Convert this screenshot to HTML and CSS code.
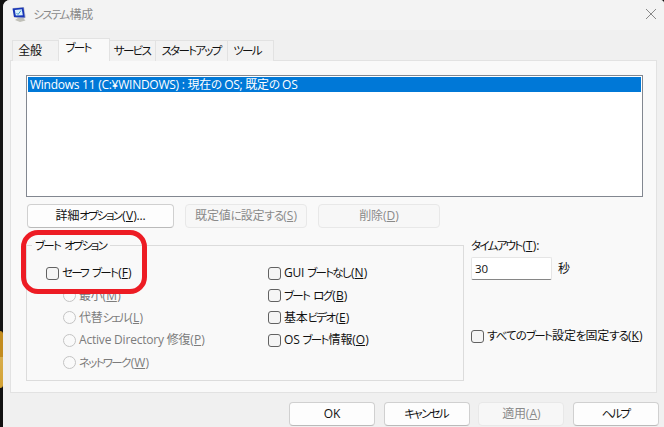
FILE: index.html
```html
<!DOCTYPE html>
<html lang="ja">
  <head>
    <meta charset="UTF-8" />
    <title>システム構成</title>
    <link rel="stylesheet" href="styles.css">
  </head>
  <body>
    <div class="desktop-edge"><div class="gold"></div></div>
    <div class="window">
      <header class="titlebar">
        <svg class="app-icon" width="16" height="16" viewBox="0 0 16 16">
          <path d="M6 11l5 0 2.500 2.500-5.500 1.500-5-2z" fill="#c0c0b8" />
          <path d="M1 1l11-1 1.800 10.500-2.800 1.500-9-1.500z" fill="#b8bbc6" />
          <path d="M.5 1.500l11-1L12.800 10.500 2 10z" fill="#1936b8" />
          <path d="M2.800 3l7-.7 1 6-7 .2z" fill="#d9f1fb" />
          <path d="M4.500 6l1.500 1.500L9 3.500" fill="none" stroke="#3b91cc" />
        </svg>
        <h1 class="title"><span class="kana">システム</span>構成</h1>
        <svg class="close" width="12" height="12" viewBox="0 0 12 12">
          <path d="M1 1l10 10M11 1L1 11" fill="none" stroke="#888" />
        </svg>
      </header>

      <nav class="tabs">
        <div class="tab general">全般</div>
        <div class="tab active"><span class="kana">ブート</span></div>
        <div class="tab service"><span class="kana">サービス</span></div>
        <div class="tab startup"><span class="kana">スタートアップ</span></div>
        <div class="tab tools"><span class="kana">ツール</span></div>
      </nav>

      <main class="panel">
        <div class="boot-list">
          <div class="boot-entry">Windows 11 (C:¥WINDOWS) : 現在<span class="kana">の</span> OS; 既定<span class="kana">の</span> OS</div>
        </div>

        <div class="actions">
          <button class="btn wide">詳細<span class="kana">オプション</span>(<u>V</u>)...</button>
          <button class="btn" disabled>既定値<span class="kana hira">に</span>設定<span class="kana hira">する</span>(<u>S</u>)</button>
          <button class="btn" disabled>削除(<u>D</u>)</button>
        </div>

        <div class="settings">
          <section class="group">
            <h2 class="legend"><span class="kana">ブート</span> <span class="kana">オプション</span></h2>
            <div class="column">
              <label class="option"><i class="box"></i><span><span class="kana">セーフ</span> <span class="kana">ブート</span>(<u>F</u>)</span></label>
              <label class="option sub"><i class="radio"></i><span>最小(<u>M</u>)</span></label>
              <label class="option sub"><i class="radio"></i><span>代替<span class="kana">シェル</span>(<u>L</u>)</span></label>
              <label class="option sub"><i class="radio"></i><span>Active Directory 修復(<u>P</u>)</span></label>
              <label class="option sub"><i class="radio"></i><span><span class="kana">ネットワーク</span>(<u>W</u>)</span></label>
            </div>
            <div class="column">
              <label class="option"><i class="box"></i><span>GUI <span class="kana">ブートなし</span>(<u>N</u>)</span></label>
              <label class="option"><i class="box"></i><span><span class="kana">ブート</span> <span class="kana">ログ</span>(<u>B</u>)</span></label>
              <label class="option"><i class="box"></i><span>基本<span class="kana">ビデオ</span>(<u>E</u>)</span></label>
              <label class="option"><i class="box"></i><span>OS <span class="kana">ブート</span>情報(<u>O</u>)</span></label>
            </div>
            <div class="highlight"></div>
          </section>

          <section class="timeout">
            <div class="timeout-label"><span class="kana">タイムアウト</span>(<u>T</u>):</div>
            <div class="timeout-row"><input class="seconds" type="text" value="30"><span>秒</span></div>
            <label class="option permanent"><i class="box"></i><span><span class="kana hira">すべての</span><span class="kana">ブート</span>設定<span class="kana hira">を</span>固定<span class="kana hira">する</span>(<u>K</u>)</span></label>
          </section>
        </div>
      </main>

      <footer class="footer">
        <button class="btn">OK</button>
        <button class="btn"><span class="kana">キャンセル</span></button>
        <button class="btn" disabled>適用(<u>A</u>)</button>
        <button class="btn"><span class="kana">ヘルプ</span></button>
      </footer>
    </div>
  </body>
</html>
```

FILE: styles.css
```css
* {
  margin: 0;
  padding: 0;
  box-sizing: border-box;
}

body {
  width: 664px;
  height: 427px;
  overflow: hidden;
  display: flex;
  background: #111;
  color: #111;
  font: 12px/16px "Open Sans", "Noto Sans CJK JP", sans-serif;
  letter-spacing: -0.2px;
  white-space: nowrap;
}

.kana {
  margin-right: 1px;
  font-size: 11.5px;
  font-feature-settings: "palt";
  letter-spacing: -1.7px;
}

.hira {
  margin-right: 0;
  letter-spacing: -0.9px;
}

u {
  margin: 0 0.3px;
  text-decoration-thickness: 1px;
  text-underline-offset: 1px;
}

.desktop-edge {
  width: 3px;
  padding-top: 331px;
  background: #111;
}

.gold {
  height: 57px;
  border-radius: 0 3px 3px 0;
  background: linear-gradient(#c38d20 46%, #d7ad4c 46%, #d4a232);
}

.window {
  width: 661px;
  height: 427px;
  background: #f0f0f0;
  border-radius: 7px 4px 0 0;
  overflow: hidden;
}

.titlebar {
  height: 30px;
  padding: 0 7px 0 9px;
  display: flex;
  align-items: center;
  background: #f3f3f3;
}

.app-icon {
  margin-top: -1px;
}

.title {
  margin-left: 5.5px;
  flex: 1;
  font-size: 12px;
  font-weight: normal;
  color: #8b8b8b;
}

.close {
  margin-top: -2px;
}

.tabs {
  height: 31px;
  margin-left: 9px;
  display: flex;
  align-items: flex-end;
}

.tab {
  height: 21px;
  padding-top: 2px;
  border: 1px solid #e2e2e2;
  border-left: none;
  border-bottom: none;
  background: #f2f2f2;
  text-align: center;
}

.general {
  width: 47px;
  padding-right: 11px;
  border-left: 1px solid #e2e2e2;
}

.tab.active {
  width: 51px;
  height: 23px;
  padding: 1px 11px 0 0;
  background: #f9f9f9;
  z-index: 1;
}

.service {
  width: 46px;
}

.startup {
  width: 72px;
}

.tools {
  width: 46px;
  padding-right: 6px;
}

.panel {
  width: 647px;
  height: 333px;
  margin: -1px 0 0 7px;
  padding: 14px 14px 0 15px;
  border: 1px solid #e2e2e2;
  background: #f9f9f9;
}

.boot-list {
  width: 617px;
  height: 122px;
  padding: 1px;
  border: 1px solid #828790;
  background: #fff;
}

.boot-entry {
  height: 15px;
  padding-left: 2px;
  line-height: 15px;
  letter-spacing: -0.26px;
  color: #fff;
  background: #0078d7;
}

.actions {
  display: flex;
  gap: 11px;
  padding: 7px 0 0 1px;
}

.btn {
  width: 122px;
  height: 24px;
  border: 1px solid #d0d0d0;
  border-bottom-color: #bababa;
  border-radius: 4px;
  background: #fdfdfd;
  color: #111;
  font: inherit;
  letter-spacing: inherit;
}

.btn.wide {
  width: 147px;
}

.btn:disabled {
  color: #8a8a8a;
  border-color: #e8e8e8;
  background: #f7f7f7;
}

.settings {
  display: flex;
  padding-top: 17px;
}

.group {
  position: relative;
  flex: none;
  width: 438px;
  height: 136px;
  border: 1px solid #dcdcdc;
  display: grid;
  grid-template-columns: 222px 1fr;
  grid-template-rows: 15px auto;
}

.legend {
  grid-column: 1 / 3;
  justify-self: start;
  height: 16px;
  margin: -8px 0 0 5px;
  padding: 0 3px;
  background: #f9f9f9;
  font-size: 12px;
  font-weight: normal;
}

.column {
  padding: 1px 0 0 19px;
}

.option {
  height: 22.4px;
  display: flex;
  align-items: center;
  gap: 3px;
}

.sub {
  padding-left: 17px;
  color: #7c7c7c;
}

.box,
.radio {
  width: 13px;
  height: 13px;
  border: 1px solid #626262;
  border-radius: 3px;
  background: #f5f5f5;
}

.radio {
  border-color: #c4c4c4;
  border-radius: 50%;
  background: #fafafa;
}

/* red marker drawn over the safe boot option */
.highlight {
  position: absolute;
  left: -6px;
  top: -16px;
  width: 126px;
  height: 64px;
  border: 5px solid #ed1c24;
  border-radius: 17px;
}

.timeout {
  padding-left: 7px;
}

.timeout-label {
  margin-top: -7px;
}

.timeout-row {
  display: flex;
  align-items: center;
  gap: 6px;
  margin-top: 3px;
}

.seconds {
  width: 81px;
  height: 23px;
  padding: 0 3px 1px;
  border: 1px solid #e5e5e5;
  border-bottom-color: #868686;
  border-radius: 2px;
  background: #fff;
  color: #111;
  font: inherit;
  font-size: 11.5px;
  letter-spacing: inherit;
}

.permanent {
  margin-top: 45px;
}

.footer {
  display: flex;
  justify-content: flex-end;
  gap: 8.7px;
  padding: 9px 5px 0 0;
}

.footer .btn {
  width: 86px;
}
```
